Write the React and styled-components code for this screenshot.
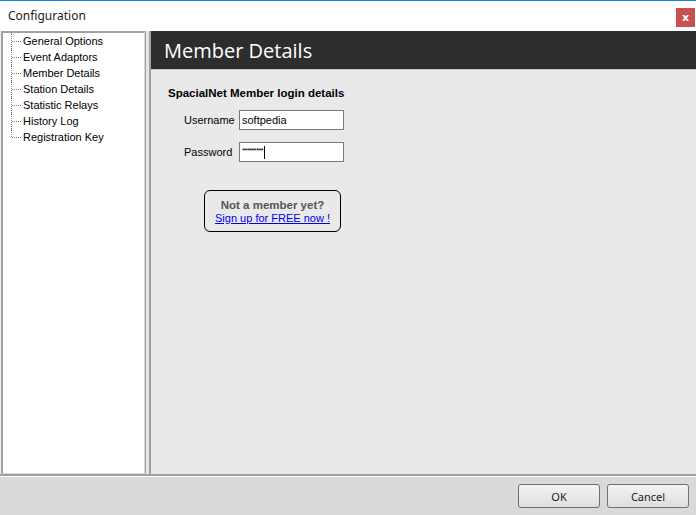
import React from 'react'
import styled, { createGlobalStyle } from 'styled-components'

const GlobalStyle = createGlobalStyle`
  html, body {
    margin: 0;
    padding: 0;
    width: 696px;
    height: 515px;
    overflow: hidden;
    font-family: "Liberation Sans", Arial, sans-serif;
  }
`

const treeItems = [
  'General Options',
  'Event Adaptors',
  'Member Details',
  'Station Details',
  'Statistic Relays',
  'History Log',
  'Registration Key',
]

const App = () => {
  return (
    <Window>
      <GlobalStyle />
      <TitleBar>
        <Title>Configuration</Title>
        <CloseButton>x</CloseButton>
      </TitleBar>
      <Main>
        <TreePanel>
          <Tree>
            {treeItems.map((item, i) => (
              <TreeItem key={item} last={i === treeItems.length - 1}>
                {item}
              </TreeItem>
            ))}
          </Tree>
        </TreePanel>
        <Splitter />
        <Content>
          <Header>Member Details</Header>
          <Body>
            <SectionTitle>SpacialNet Member login details</SectionTitle>
            <Form>
              <Label>Username</Label>
              <Field>softpedia</Field>
              <Label>Password</Label>
              <Field>
                <Masked>*********</Masked>
                <Caret />
              </Field>
            </Form>
            <Callout>
              <CalloutTitle>Not a member yet?</CalloutTitle>
              <SignUp href="#">Sign up for FREE now !</SignUp>
            </Callout>
          </Body>
        </Content>
      </Main>
      <Footer>
        <Button>OK</Button>
        <Button>Cancel</Button>
      </Footer>
    </Window>
  )
}

const Window = styled.div`
  width: 696px;
  height: 515px;
  display: flex;
  flex-direction: column;
  background: #ffffff;
`

const TitleBar = styled.div`
  height: 30px;
  border-top: 1px solid #1883d7;
  display: flex;
  align-items: center;
  justify-content: space-between;
  padding: 0 1px 0 8px;
  background: #ffffff;
`

const Title = styled.span`
  font-family: "Noto Sans", "Open Sans", sans-serif;
  font-size: 12px;
  color: #1a1a1a;
  margin-top: -1px;
`

const CloseButton = styled.div`
  width: 19px;
  height: 19px;
  margin-top: 2px;
  background: #c75050;
  color: #ffffff;
  font-family: "DejaVu Sans", sans-serif;
  font-size: 11px;
  font-weight: bold;
  display: flex;
  align-items: center;
  justify-content: center;
  line-height: 1;
`

const Main = styled.div`
  flex: 1;
  display: flex;
  background: #f0f0f0;
  border-bottom: 2px solid #a0a0a0;
`

const TreePanel = styled.div`
  width: 141px;
  margin-left: 1px;
  background: #ffffff;
  border-top: 2px solid #a0a0a0;
  border-left: 2px solid #a0a0a0;
  border-right: 1px solid #d8d8d8;
  border-bottom: 1px solid #d8d8d8;
`

const Tree = styled.ul`
  list-style: none;
  margin: 0;
  padding: 0;
`

const TreeItem = styled.li`
  position: relative;
  height: 16px;
  line-height: 16px;
  padding-left: 20px;
  font-size: 11px;
  color: #000000;
  white-space: nowrap;

  &::before {
    content: '';
    position: absolute;
    left: 8px;
    top: 0;
    height: ${(p) => (p.last ? '8px' : '16px')};
    border-left: 1px dotted #808080;
  }

  &::after {
    content: '';
    position: absolute;
    left: 9px;
    top: 8px;
    width: 9px;
    border-top: 1px dotted #808080;
  }
`

const Splitter = styled.div`
  width: 3px;
  border-left: 1px solid #a0a0a0;
  border-right: 1px solid #a0a0a0;
  background: #e6e6e6;
`

const Content = styled.div`
  flex: 1;
  display: flex;
  flex-direction: column;
  border-left: 1px solid #a0a0a0;
  background: #e9e9e9;
`

const Header = styled.div`
  height: 38px;
  background: #2d2d2d;
  border-bottom: 1px solid #c8c8c8;
  color: #ffffff;
  font-family: "Open Sans", "Noto Sans", sans-serif;
  font-size: 20px;
  line-height: 39px;
  padding-left: 13px;
`

const Body = styled.div`
  flex: 1;
  padding: 17px 0 0 17px;
`

const SectionTitle = styled.div`
  font-size: 11.5px;
  font-weight: bold;
  color: #000000;
`

const Form = styled.div`
  display: grid;
  grid-template-columns: 55px 105px;
  row-gap: 12px;
  align-items: center;
  margin: 11px 0 0 16px;
`

const Label = styled.span`
  font-size: 11px;
  color: #000000;
`

const Field = styled.div`
  height: 18px;
  border: 1px solid #7a7a7a;
  background: #ffffff;
  font-size: 11px;
  line-height: 18px;
  padding-left: 2px;
  display: flex;
  align-items: center;
`

const Masked = styled.span`
  font-size: 8px;
  letter-spacing: -0.8px;
  margin-top: -2px;
`

const Caret = styled.span`
  width: 1px;
  height: 13px;
  background: #000000;
  margin-left: 1px;
`

const Callout = styled.div`
  width: 135px;
  height: 40px;
  margin: 28px 0 0 36px;
  border: 1px solid #000000;
  border-radius: 6px;
  display: flex;
  flex-direction: column;
  align-items: center;
  justify-content: center;
  gap: 1px;
`

const CalloutTitle = styled.span`
  font-size: 11.5px;
  font-weight: bold;
  color: #555555;
`

const SignUp = styled.a`
  font-size: 11px;
  color: #0000ee;
  text-decoration: underline;
`

const Footer = styled.div`
  height: 38px;
  border-top: 1px solid #ffffff;
  background: #d9d9d9;
  display: flex;
  align-items: center;
  justify-content: flex-end;
  gap: 7px;
  padding-right: 7px;
`

const Button = styled.button`
  width: 82px;
  height: 24px;
  border: 1px solid #707070;
  border-radius: 3px;
  background: linear-gradient(#f4f4f4, #dedede);
  font-family: "Noto Sans", "Open Sans", sans-serif;
  font-size: 11px;
  color: #1a1a1a;
  padding: 0;
`

export default App
